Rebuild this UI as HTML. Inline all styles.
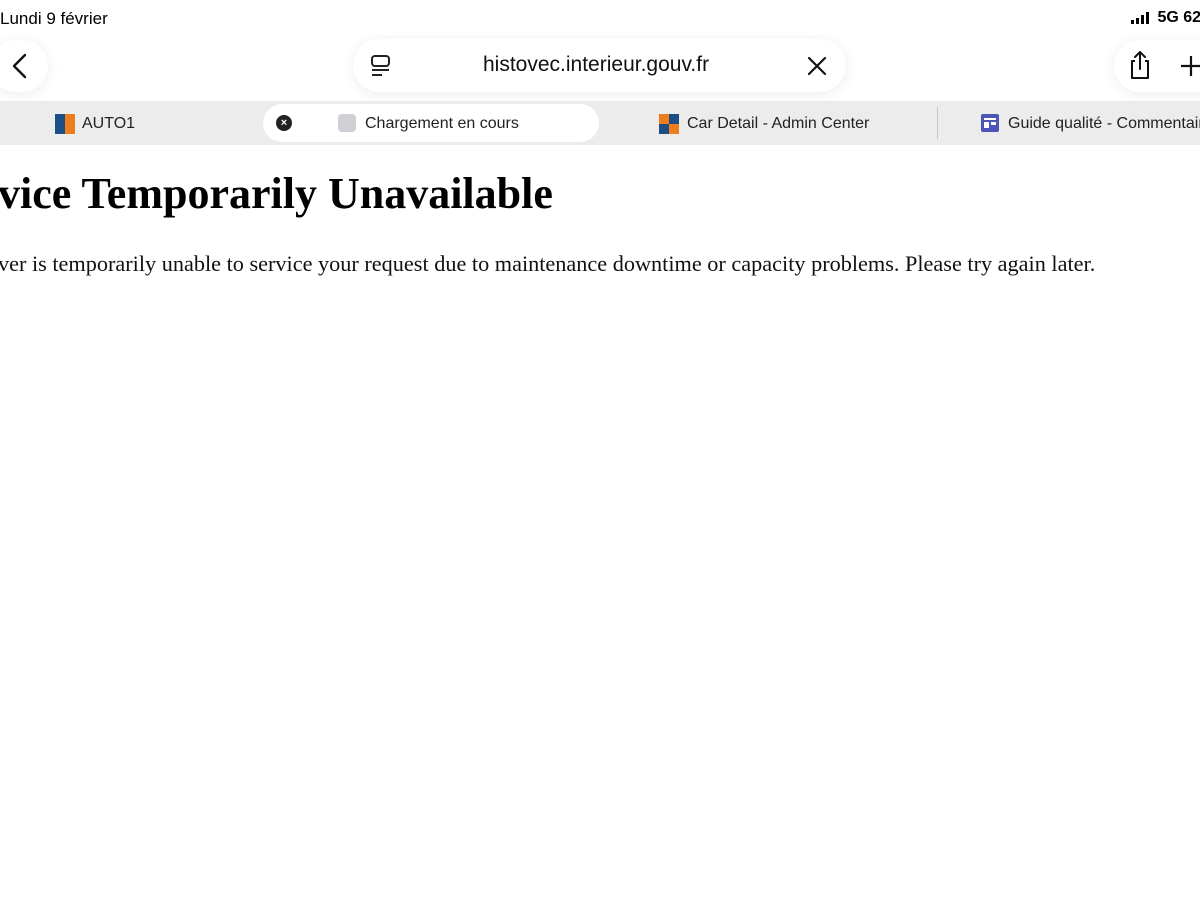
<!DOCTYPE html>
<html><head><meta charset="utf-8"><style>
body{margin:0;width:1200px;height:900px;background:#fff;overflow:hidden;position:relative;font-family:"Liberation Sans",sans-serif}
.abs{position:absolute}
.status{top:9px;font-size:17px;color:#000;white-space:nowrap}
.pill{background:#fff;border-radius:27px;box-shadow:0 2px 14px rgba(0,0,0,0.08)}
.tabbar{top:101px;left:0;width:1200px;height:44px;background:#ececec}
.tab{top:1px;height:44px;line-height:44px;font-size:16px;color:#222;white-space:nowrap}
h1{position:absolute;margin:0;left:-2px;top:168px;font-family:"Liberation Serif",serif;font-weight:bold;font-size:44px;white-space:nowrap}
p{position:absolute;margin:0;left:-2px;top:251px;font-family:"Liberation Serif",serif;font-size:22.25px;white-space:nowrap;color:#111}
</style></head><body>
<div class="abs status" style="left:0">Lundi 9 février</div>
<div class="abs status" style="left:1131px;font-weight:600;font-size:16px">
<span style="display:inline-block;vertical-align:middle;width:22px;height:12px;position:relative">
<i style="position:absolute;left:0;bottom:0;width:3px;height:4px;background:#000"></i>
<i style="position:absolute;left:5px;bottom:0;width:3px;height:6px;background:#000"></i>
<i style="position:absolute;left:10px;bottom:0;width:3px;height:9px;background:#000"></i>
<i style="position:absolute;left:15px;bottom:0;width:3px;height:12px;background:#000"></i>
</span> 5G 62</div>
<div class="abs pill" style="left:-10px;top:40px;width:58px;height:52px"></div>
<svg class="abs" style="left:10px;top:53px" width="20" height="26"><path d="M15 2 L4 13 L15 24" stroke="#111" stroke-width="2.4" fill="none" stroke-linecap="round" stroke-linejoin="round"/></svg>
<div class="abs pill" style="left:353px;top:39px;width:493px;height:53px"></div>
<svg class="abs" style="left:370px;top:54px" width="22" height="24"><rect x="2" y="2" width="17" height="10" rx="3" stroke="#222" stroke-width="2" fill="none"/><line x1="2" y1="16" x2="19" y2="16" stroke="#222" stroke-width="2"/><line x1="2" y1="21" x2="12" y2="21" stroke="#222" stroke-width="2"/></svg>
<div class="abs" style="left:483px;top:53px;font-size:21px;color:#111">histovec.interieur.gouv.fr</div>
<svg class="abs" style="left:806px;top:55px" width="22" height="22"><path d="M3 3 L19 19 M19 3 L3 19" stroke="#111" stroke-width="2.2" stroke-linecap="round"/></svg>
<div class="abs pill" style="left:1114px;top:40px;width:120px;height:52px"></div>
<svg class="abs" style="left:1126px;top:49px" width="28" height="32"><path d="M9 12 H6 V29 H22 V12 H19" stroke="#111" stroke-width="2" fill="none" stroke-linejoin="round"/><path d="M14 20 V3 M9 8 L14 3 L19 8" stroke="#111" stroke-width="2" fill="none" stroke-linecap="round" stroke-linejoin="round"/></svg>
<svg class="abs" style="left:1180px;top:55px" width="22" height="22"><path d="M11 1 V21 M1 11 H21" stroke="#111" stroke-width="2.2"/></svg>
<div class="abs tabbar">
<div class="abs" style="left:55px;top:13px;width:10px;height:20px;background:#1d4f86"></div>
<div class="abs" style="left:65px;top:13px;width:10px;height:20px;background:#ee7d1e"></div>
<div class="abs tab" style="left:82px">AUTO1</div>
<div class="abs" style="left:263px;top:3px;width:336px;height:38px;background:#fff;border-radius:19px"></div>
<div class="abs" style="left:276px;top:14px;width:16px;height:16px;border-radius:50%;background:#222;color:#fff;font-size:11px;line-height:16px;text-align:center;font-weight:bold">×</div>
<div class="abs" style="left:338px;top:13px;width:18px;height:18px;border-radius:4px;background:#cfd0d6"></div>
<div class="abs tab" style="left:365px">Chargement en cours</div>
<div class="abs" style="left:659px;top:13px;width:10px;height:10px;background:#ee7d1e"></div>
<div class="abs" style="left:669px;top:13px;width:10px;height:10px;background:#1d4f86"></div>
<div class="abs" style="left:659px;top:23px;width:10px;height:10px;background:#1d4f86"></div>
<div class="abs" style="left:669px;top:23px;width:10px;height:10px;background:#ee7d1e"></div>
<div class="abs tab" style="left:687px">Car Detail - Admin Center</div>
<div class="abs" style="left:937px;top:6px;width:1px;height:32px;background:#c8c8c8"></div>
<div class="abs" style="left:981px;top:13px;width:18px;height:18px;border-radius:2px;background:#4b55b8"></div>
<div class="abs" style="left:984px;top:17px;width:12px;height:2px;background:#fff"></div>
<div class="abs" style="left:984px;top:21px;width:5px;height:6px;background:#fff"></div>
<div class="abs" style="left:991px;top:21px;width:5px;height:3px;background:#fff"></div>
<div class="abs tab" style="left:1008px">Guide qualité - Commentaires</div>
</div>
<h1>vice Temporarily Unavailable</h1>
<p>ver is temporarily unable to service your request due to maintenance downtime or capacity problems. Please try again later.</p>
</body></html>
